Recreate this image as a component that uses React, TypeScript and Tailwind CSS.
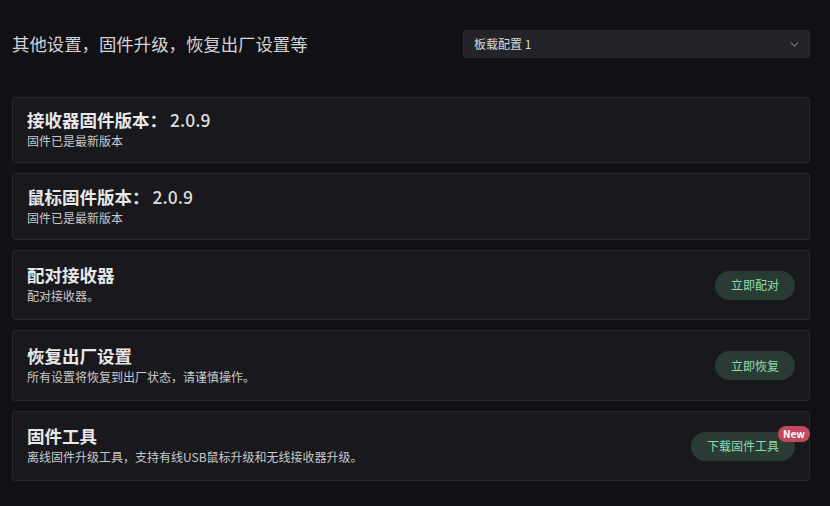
import { ChevronDown } from "lucide-react";

type Row = {
  title: string;
  version?: string;
  desc: string;
  action?: string;
  badge?: string;
  h: string;
};

const ROWS: Row[] = [
  { title: "接收器固件版本：", version: "2.0.9", desc: "固件已是最新版本", h: "h-[66px]" },
  { title: "鼠标固件版本：", version: "2.0.9", desc: "固件已是最新版本", h: "h-[67px]" },
  { title: "配对接收器", desc: "配对接收器。", action: "立即配对", h: "h-[70px]" },
  { title: "恢复出厂设置", desc: "所有设置将恢复到出厂状态，请谨慎操作。", action: "立即恢复", h: "h-[71px]" },
  {
    title: "固件工具",
    desc: "离线固件升级工具，支持有线USB鼠标升级和无线接收器升级。",
    action: "下载固件工具",
    badge: "New",
    h: "h-[70px]",
  },
];

export default function App() {
  return (
    <div
      className="w-[830px] h-[506px] bg-[#111115] pl-3 pr-5 pt-[30px] overflow-hidden"
      style={{ fontFamily: '"Noto Sans CJK SC", "Noto Sans", sans-serif' }}
    >
      {/* header */}
      <div className="flex items-center justify-between h-[28px]">
        <h1 className="text-[17.4px] text-[#d4d4d6] leading-7">
          其他设置，固件升级，恢复出厂设置等
        </h1>
        <button
          type="button"
          className="w-[347px] h-[28px] flex items-center justify-between rounded-[3px] bg-[#232328] border border-[#2a2a30] pl-[10px] pr-[8px] text-[12px] text-[#d8d8da]"
        >
          <span>板载配置 1</span>
          <ChevronDown size={13} className="text-[#77777d]" />
        </button>
      </div>

      {/* rows */}
      <div className="mt-[39px] flex flex-col gap-[10px]">
        {ROWS.map((r) => (
          <div
            key={r.title}
            className={`${r.h} flex items-center justify-between rounded-[3px] bg-[#19191d] border border-[#27272c] pl-[14px] pr-[14px]`}
          >
            <div className="flex flex-col pb-[3px]">
              <div className="text-[17.5px] leading-6 font-bold text-[#e8e8ea] flex items-baseline">
                <span>{r.title}</span>
                {r.version && (
                  <span className="font-medium ml-[3px] text-[#dcdcde]">{r.version}</span>
                )}
              </div>
              <div className="text-[12px] leading-4 mt-[1px] text-[#c9c9cc]">{r.desc}</div>
            </div>
            {r.action && (
              <div className="relative">
                <button
                  type="button"
                  className="h-[29px] px-[16px] rounded-full bg-[#2a3b34] text-[12px] text-[#8edbb3]"
                >
                  {r.action}
                </button>
                {r.badge && (
                  <span className="absolute -top-[6px] -right-[15px] h-[16px] px-[5px] rounded-full bg-[#c3475e] text-white text-[10px] font-bold leading-4">
                    {r.badge}
                  </span>
                )}
              </div>
            )}
          </div>
        ))}
      </div>
    </div>
  );
}
